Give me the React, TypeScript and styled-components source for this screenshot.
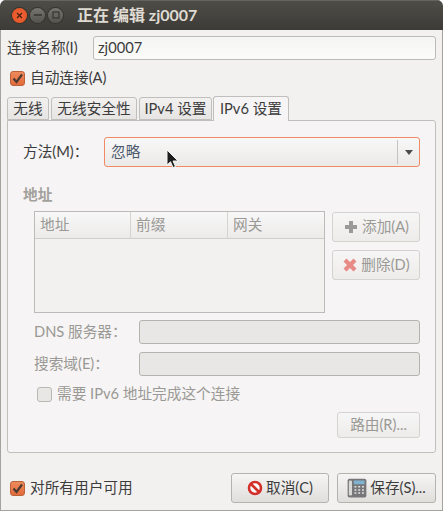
import { FunctionComponent, ReactNode } from 'react';
import styled, { createGlobalStyle } from 'styled-components';

const GlobalStyle = createGlobalStyle`
    html, body {
        margin: 0;
        padding: 0;
        background: #fff;
    }
    * {
        box-sizing: border-box;
    }
`;

const Window = styled.div`
    width: 443px;
    height: 511px;
    display: flex;
    flex-direction: column;
    position: relative;
    overflow: hidden;
    background: #f2f1f0;
    color: #3c3c3c;
    border-radius: 6px 6px 0 0;
    font-family: 'Lato', 'Noto Sans CJK SC', sans-serif;
    font-size: 14.67px;
    line-height: 18px;
`;

const TitleBar = styled.div`
    height: 30px;
    flex: none;
    display: flex;
    align-items: center;
    padding-left: 12px;
    background: linear-gradient(#4f4d47, #3c3b37);
    box-shadow: inset 0 1px 0 #66645e;
`;

const WindowButton = styled.span<{ $close?: boolean }>`
    width: 15px;
    height: 15px;
    margin-right: 3px;
    border-radius: 50%;
    display: flex;
    align-items: center;
    justify-content: center;
    background: ${(p) => (p.$close ? 'radial-gradient(#f0673c, #e2501f)' : 'linear-gradient(#77756f, #55534e)')};
    box-shadow: 0 0 0 1px #35342f;
`;

const Title = styled.span`
    margin-left: 11px;
    font-size: 16px;
    font-weight: 700;
    color: #dfdbd2;
`;

const Body = styled.div`
    flex: 1;
    display: flex;
    flex-direction: column;
    padding: 6px 6px 7px 6px;
    border: 1px solid #a5a39e;
    border-top: none;
`;

const NameRow = styled.div`
    display: flex;
    align-items: center;
`;

const NameLabel = styled.span`
    width: 86px;
    flex: none;
`;

const Input = styled.div<{ $disabled?: boolean }>`
    height: 24px;
    flex: 1;
    display: flex;
    align-items: center;
    padding-left: 4px;
    border-radius: 3px;
    border: 1px solid ${(p) => (p.$disabled ? '#b5b3ae' : '#bdbbb6')};
    background: ${(p) => (p.$disabled ? '#e8e7e5' : 'linear-gradient(#f5f5f4, #fbfbfa)')};
`;

const CheckRow = styled.label<{ $indent?: number; $top?: number; $disabled?: boolean }>`
    display: flex;
    align-items: center;
    gap: 5px;
    margin-left: ${(p) => p.$indent ?? 3}px;
    margin-top: ${(p) => p.$top ?? 0}px;
    color: ${(p) => (p.$disabled ? '#9a9995' : '#3c3c3c')};
`;

const CheckBox = styled.span<{ $disabled?: boolean }>`
    width: 15px;
    height: 15px;
    flex: none;
    border-radius: 3px;
    display: flex;
    align-items: center;
    justify-content: center;
    border: 1px solid ${(p) => (p.$disabled ? '#b8b7b3' : '#b9623a')};
    background: ${(p) => (p.$disabled ? '#e8e7e5' : 'linear-gradient(#ee8a5c, #e26a3a)')};
`;

const TabBar = styled.div`
    display: flex;
    align-items: flex-end;
    gap: 2px;
    height: 24px;
    margin-top: 9px;
    position: relative;
    z-index: 1;
`;

const Tab = styled.div<{ $active?: boolean; $width: number }>`
    width: ${(p) => p.$width}px;
    height: ${(p) => (p.$active ? 25 : 23)}px;
    display: flex;
    align-items: center;
    justify-content: center;
    margin-left: ${(p) => (p.$active ? -1 : 0)}px;
    margin-bottom: ${(p) => (p.$active ? -1 : 0)}px;
    border: 1px solid #c0bfbb;
    border-bottom: ${(p) => (p.$active ? 'none' : '1px solid #c0bfbb')};
    border-radius: 3px 3px 0 0;
    background: ${(p) => (p.$active ? '#f6f4f4' : 'linear-gradient(#f2f1f0, #e6e5e3)')};
`;

const Panel = styled.div`
    height: 333px;
    display: flex;
    flex-direction: column;
    padding: 16px 15px 0 15px;
    background: #f6f4f4;
    border: 1px solid #c0bfbb;
    border-radius: 0 3px 3px 3px;
`;

const MethodRow = styled.div`
    display: flex;
    align-items: center;
`;

const MethodLabel = styled.span`
    width: 81px;
    flex: none;
`;

const Combo = styled.div`
    flex: 1;
    height: 30px;
    display: flex;
    align-items: center;
    padding-left: 6px;
    border: 1px solid #ef8a65;
    border-radius: 3px;
    background: linear-gradient(#f9f8f8, #ebeae8);
`;

const ComboText = styled.span`
    flex: 1;
    color: #4c5a6e;
`;

const ComboArrow = styled.span`
    width: 22px;
    height: 24px;
    flex: none;
    display: flex;
    align-items: center;
    justify-content: center;
    border-left: 1px solid #c4c3bf;
    &::after {
        content: '';
        border-left: 4px solid transparent;
        border-right: 4px solid transparent;
        border-top: 5px solid #4c4c4c;
    }
`;

const SectionTitle = styled.div`
    margin-top: 19px;
    font-weight: 700;
    color: #a3a19c;
`;

const AddressRow = styled.div`
    display: flex;
    margin: 7px 0 0 11px;
    gap: 7px;
    align-items: flex-start;
`;

const Table = styled.div`
    width: 291px;
    height: 102px;
    flex: none;
    border: 1px solid #bcbbb7;
    background: #f2f1f0;
`;

const TableHead = styled.div`
    display: grid;
    grid-template-columns: 96px 97px 1fr;
    height: 27px;
    border-bottom: 1px solid #cfcec9;
    background: linear-gradient(#f9f8f8, #ecebe9);
`;

const HeadCell = styled.div`
    display: flex;
    align-items: center;
    padding-left: 5px;
    color: #9a9995;
    border-right: 1px solid #d5d4d0;
    &:last-child {
        border-right: none;
    }
`;

const SideButtons = styled.div`
    display: flex;
    flex-direction: column;
    gap: 8px;
    margin-top: 1px;
`;

const Button = styled.div<{ $width: number; $height?: number; $muted?: boolean }>`
    width: ${(p) => p.$width}px;
    height: ${(p) => p.$height ?? 30}px;
    display: flex;
    align-items: center;
    justify-content: center;
    gap: 3px;
    border-radius: 3px;
    white-space: nowrap;
    border: 1px solid ${(p) => (p.$muted ? '#d4d3cf' : '#b5b3ae')};
    color: ${(p) => (p.$muted ? '#9a9995' : '#3c3c3c')};
    background: ${(p) =>
        p.$muted ? 'linear-gradient(#f7f6f6, #edecea)' : 'linear-gradient(#f6f5f4, #dfdedb)'};
`;

const FieldRow = styled.div<{ $top: number }>`
    display: flex;
    align-items: center;
    margin: ${(p) => p.$top}px 0 0 11px;
    color: #9a9995;
`;

const FieldLabel = styled.span`
    width: 105px;
    flex: none;
`;

const RouteRow = styled.div`
    display: flex;
    justify-content: flex-end;
    margin-top: 9px;
`;

const Footer = styled.div`
    margin-top: auto;
    display: flex;
    align-items: center;
    justify-content: space-between;
`;

const FooterButtons = styled.div`
    display: flex;
    gap: 8px;
`;

const PointerLayer = styled.svg`
    position: absolute;
    left: 166px;
    top: 149px;
`;

const Tick: FunctionComponent = () => (
    <svg width="13" height="13" viewBox="0 0 13 13">
        <path d="M2.5 6.5 L5.5 10 L11 2.5" fill="none" stroke="#4a3a32" strokeWidth="2.2" />
    </svg>
);

const Field: FunctionComponent<{ label: string; top: number }> = ({ label, top }) => (
    <FieldRow $top={top}>
        <FieldLabel>{label}</FieldLabel>
        <Input $disabled />
    </FieldRow>
);

const ButtonIcon: FunctionComponent<{ children: ReactNode; size?: number }> = ({ children, size = 16 }) => (
    <svg width={size} height={size} viewBox="0 0 16 16">
        {children}
    </svg>
);

export default function App() {
    return (
        <>
            <GlobalStyle />
            <Window>
                <TitleBar>
                    <WindowButton $close>
                        <svg width="7" height="7" viewBox="0 0 7 7">
                            <path d="M1 1 L6 6 M6 1 L1 6" stroke="#4a2010" strokeWidth="1.4" />
                        </svg>
                    </WindowButton>
                    <WindowButton>
                        <svg width="8" height="8" viewBox="0 0 8 8">
                            <path d="M0 4 H8" stroke="#35342f" strokeWidth="1.4" />
                        </svg>
                    </WindowButton>
                    <WindowButton>
                        <svg width="8" height="8" viewBox="0 0 8 8">
                            <rect x="1" y="1" width="6" height="6" fill="none" stroke="#35342f" strokeWidth="1.2" />
                        </svg>
                    </WindowButton>
                    <Title>正在 编辑 zj0007</Title>
                </TitleBar>
                <Body>
                    <NameRow>
                        <NameLabel>连接名称(I)</NameLabel>
                        <Input>zj0007</Input>
                    </NameRow>
                    <CheckRow $top={9}>
                        <CheckBox>
                            <Tick />
                        </CheckBox>
                        自动连接(A)
                    </CheckRow>
                    <TabBar>
                        <Tab $width={42}>无线</Tab>
                        <Tab $width={86}>无线安全性</Tab>
                        <Tab $width={73}>IPv4 设置</Tab>
                        <Tab $width={76} $active>
                            IPv6 设置
                        </Tab>
                    </TabBar>
                    <Panel>
                        <MethodRow>
                            <MethodLabel>方法(M)：</MethodLabel>
                            <Combo>
                                <ComboText>忽略</ComboText>
                                <ComboArrow />
                            </Combo>
                        </MethodRow>
                        <SectionTitle>地址</SectionTitle>
                        <AddressRow>
                            <Table>
                                <TableHead>
                                    <HeadCell>地址</HeadCell>
                                    <HeadCell>前缀</HeadCell>
                                    <HeadCell>网关</HeadCell>
                                </TableHead>
                            </Table>
                            <SideButtons>
                                <Button $width={88} $muted>
                                    <ButtonIcon>
                                        <path d="M6 2 H10 V6 H14 V10 H10 V14 H6 V10 H2 V6 H6 Z" fill="#9b9a97" />
                                    </ButtonIcon>
                                    添加(A)
                                </Button>
                                <Button $width={88} $muted>
                                    <ButtonIcon>
                                        <path
                                            d="M4.5 1.5 L8 5 L11.5 1.5 L14.5 4.5 L11 8 L14.5 11.5 L11.5 14.5 L8 11 L4.5 14.5 L1.5 11.5 L5 8 L1.5 4.5 Z"
                                            fill="#e88a86"
                                        />
                                    </ButtonIcon>
                                    删除(D)
                                </Button>
                            </SideButtons>
                        </AddressRow>
                        <Field label="DNS 服务器：" top={7} />
                        <Field label="搜索域(E)：" top={8} />
                        <CheckRow $indent={14} $top={9} $disabled>
                            <CheckBox $disabled />
                            需要 IPv6 地址完成这个连接
                        </CheckRow>
                        <RouteRow>
                            <Button $width={83} $height={26} $muted>
                                路由(R)...
                            </Button>
                        </RouteRow>
                    </Panel>
                    <Footer>
                        <CheckRow>
                            <CheckBox>
                                <Tick />
                            </CheckBox>
                            对所有用户可用
                        </CheckRow>
                        <FooterButtons>
                            <Button $width={98}>
                                <ButtonIcon>
                                    <circle cx="8" cy="8" r="6" fill="#fff" stroke="#d3302a" strokeWidth="2.6" />
                                    <path d="M4 4 L12 12" stroke="#d3302a" strokeWidth="2.6" />
                                </ButtonIcon>
                                取消(C)
                            </Button>
                            <Button $width={99}>
                                <ButtonIcon size={20}>
                                    <rect x="0.5" y="0.5" width="15" height="15" rx="1.5" fill="#77777a" />
                                    <rect x="1.5" y="2" width="2.5" height="12" rx="1" fill="#d8d8d6" />
                                    <rect x="5.5" y="2" width="8.5" height="3" fill="#7fb3d0" />
                                    <path
                                        d="M6 7 H7.5 M9 7 H10.5 M12 7 H13.5 M6 9.5 H7.5 M9 9.5 H10.5 M12 9.5 H13.5 M6 12 H7.5 M9 12 H10.5 M12 12 H13.5"
                                        stroke="#e4e4e2"
                                        strokeWidth="1.2"
                                    />
                                </ButtonIcon>
                                保存(S)...
                            </Button>
                        </FooterButtons>
                    </Footer>
                </Body>
                <PointerLayer width="14" height="21" viewBox="0 0 14 21">
                    <path
                        d="M1 1 V16 L4.5 12.8 L7 18.5 L9.5 17.5 L7 12 L12 12 Z"
                        fill="#1d1d1d"
                        stroke="#f4f4f4"
                        strokeWidth="1"
                    />
                </PointerLayer>
            </Window>
        </>
    );
}
